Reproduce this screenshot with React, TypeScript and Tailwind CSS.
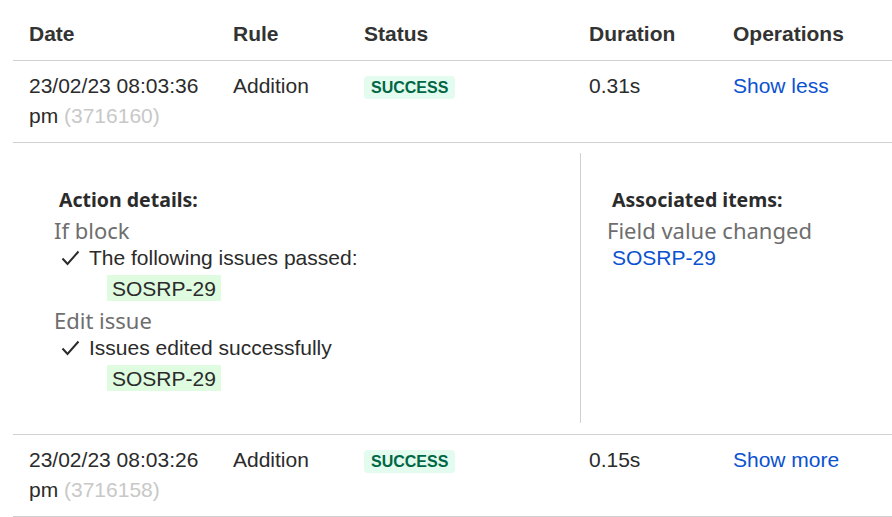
import React from "react";

const cols = "grid grid-cols-[204px_131px_225px_144px_175px]";

function Check() {
  return (
    <svg width="19" height="16" viewBox="0 0 19 16" className="shrink-0">
      <path d="M1.5 8.5 L6.5 14 L17.5 1.5" fill="none" stroke="#2b2b2b" strokeWidth="2" />
    </svg>
  );
}

function Status() {
  return (
    <span className="mt-[5px] inline-flex h-[23px] items-center rounded-[4px] bg-[#e3fcef] px-[7px] text-[16px] font-bold leading-none text-[#006644]">
      SUCCESS
    </span>
  );
}

function Row({ date, id, dur, op }: { date: string; id: string; dur: string; op: string }) {
  return (
    <div className={`${cols} border-b border-[#d0d0d0] pt-[10px] pb-[11px] leading-[30px]`}>
      <div className="pl-4">
        {date}
        <br />
        pm <span className="text-[#c8c8c8]">({id})</span>
      </div>
      <div className="pl-4">Addition</div>
      <div className="pl-4 flex items-start">
        <Status />
      </div>
      <div className="pl-4">{dur}</div>
      <div className="pl-4 text-[#0b52d0]">{op}</div>
    </div>
  );
}

function Badge() {
  return (
    <div className="mt-[4px] ml-[53px] inline-flex h-[26px] items-center self-start bg-[#dffbe0] px-[5px] leading-none">
      SOSRP-29
    </div>
  );
}

export default function App() {
  return (
    <div className="min-h-[517px] w-[892px] bg-white pl-[13px] font-['Liberation_Sans',Arial,sans-serif] text-[21px] text-[#2b2b2b]">
      <div className={`${cols} border-b border-[#d0d0d0] pt-[19px] pb-[11px] leading-[30px] font-bold text-[#333]`}>
        <div className="pl-4">Date</div>
        <div className="pl-4">Rule</div>
        <div className="pl-4">Status</div>
        <div className="pl-4">Duration</div>
        <div className="pl-4">Operations</div>
      </div>
      <Row date="23/02/23 08:03:36" id="3716160" dur="0.31s" op="Show less" />
      <div className="flex border-b border-[#d0d0d0] pt-[10px] pb-[11px]">
        <div className="flex w-[568px] flex-col border-r border-[#d0d0d0] py-[32px] pl-[41px]">
          <div className="ml-[5px] font-['Noto_Sans',sans-serif] text-[19.5px] font-bold leading-[30px] text-[#2b2b2b]">
            Action details:
          </div>
          <div className="font-['Noto_Sans',sans-serif] text-[22px] leading-[30px] text-[#6e6e6e]">If block</div>
          <div className="ml-[7px] flex h-[26px] items-center gap-[9px]">
            <Check />
            <span>The following issues passed:</span>
          </div>
          <Badge />
          <div className="mt-[4px] font-['Noto_Sans',sans-serif] text-[22px] leading-[30px] text-[#6e6e6e]">Edit issue</div>
          <div className="ml-[7px] flex h-[26px] items-center gap-[9px]">
            <Check />
            <span>Issues edited successfully</span>
          </div>
          <Badge />
        </div>
        <div className="flex flex-col pt-[32px] pl-[26px]">
          <div className="ml-[5px] font-['Noto_Sans',sans-serif] text-[19.5px] font-bold leading-[30px] text-[#2b2b2b]">
            Associated items:
          </div>
          <div className="font-['Noto_Sans',sans-serif] text-[22px] leading-[30px] text-[#6e6e6e]">Field value changed</div>
          <div className="ml-[5px] h-[26px] leading-[26px] text-[#0b52d0]">SOSRP-29</div>
        </div>
      </div>
      <Row date="23/02/23 08:03:26" id="3716158" dur="0.15s" op="Show more" />
    </div>
  );
}
